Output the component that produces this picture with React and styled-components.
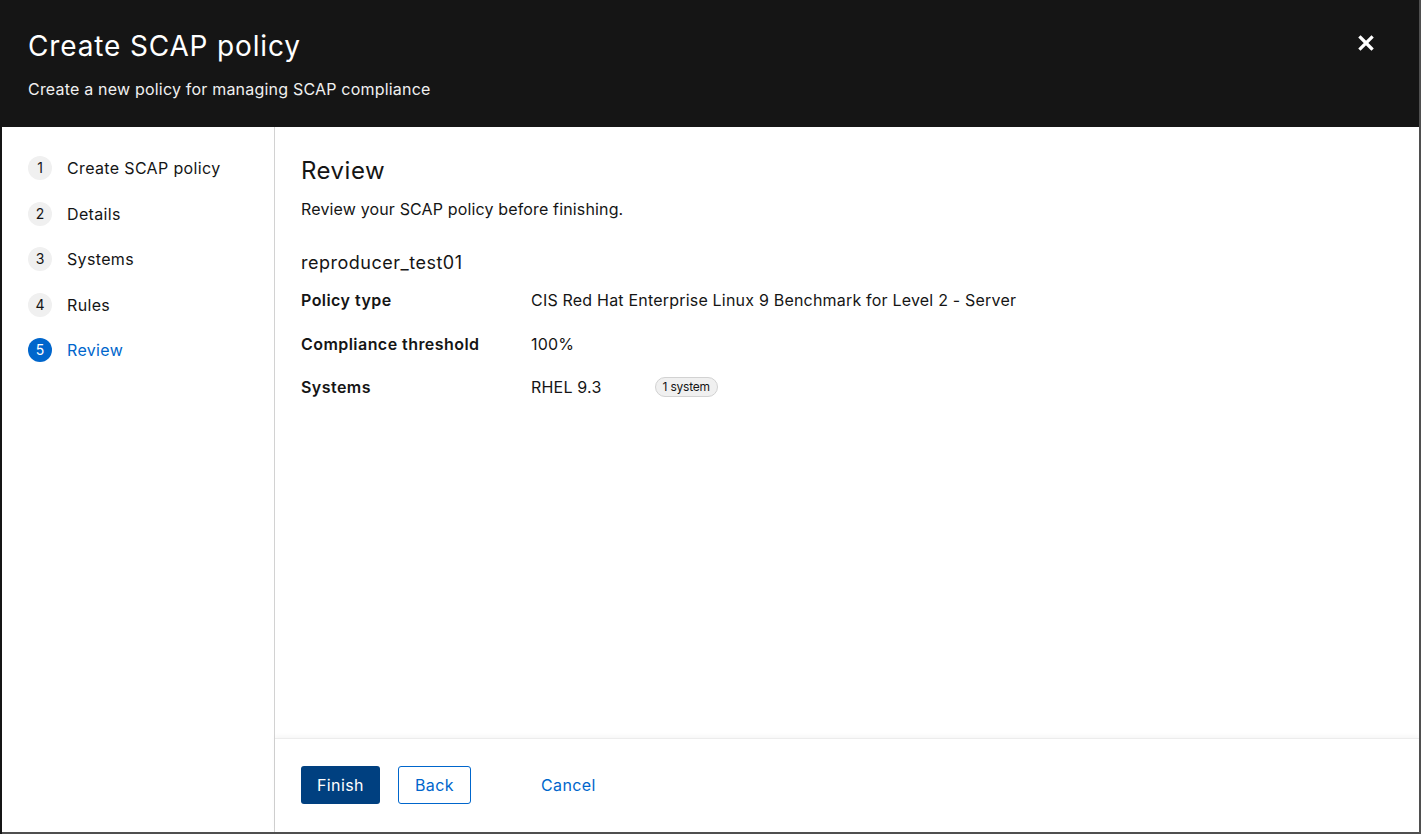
import React from 'react';
import styled, { createGlobalStyle } from 'styled-components';

const GlobalStyle = createGlobalStyle`
    html, body {
        margin: 0;
        padding: 0;
        height: 100%;
        background: #4f4f4f;
        font-family: Inter, "Noto Sans", sans-serif;
        color: #151515;
        letter-spacing: 0.2px;
    }
    #root {
        height: 100%;
    }
`;

const Backdrop = styled.div`
    height: 834px;
    box-sizing: border-box;
    padding: 0 2px 2px 0;
    border-left: 2px solid #151515;
    display: flex;
`;

const Modal = styled.div`
    flex: 1;
    display: flex;
    flex-direction: column;
    background: #fff;
    overflow: hidden;
`;

const Header = styled.div`
    height: 127px;
    box-sizing: border-box;
    background: #151515;
    color: #fff;
    padding: 27px 37px 0 26px;
    display: flex;
    justify-content: space-between;
    align-items: flex-start;
`;

const Title = styled.h1`
    margin: 0;
    font-size: 28px;
    font-weight: 400;
    line-height: 38px;
    letter-spacing: 0.85px;
`;

const Subtitle = styled.p`
    margin: 12px 0 0;
    font-size: 16px;
    line-height: 24px;
    color: #f0f0f0;
`;

const CloseBtn = styled.button`
    background: none;
    border: 0;
    padding: 8px;
    cursor: pointer;
    display: flex;
`;

const Body = styled.div`
    flex: 1;
    display: flex;
    min-height: 0;
`;

const Nav = styled.nav`
    width: 273px;
    border-right: 1px solid #d2d2d2;
    padding: 29px 0 0 26px;
    box-sizing: border-box;
    display: flex;
    flex-direction: column;
    gap: 21.5px;
`;

const NavItem = styled.div`
    display: flex;
    align-items: center;
    gap: 15px;
    font-size: 16px;
    line-height: 24px;
    letter-spacing: 0.35px;
    color: ${p => (p.active ? '#0066cc' : '#151515')};
`;

const Step = styled.span`
    width: 24px;
    height: 24px;
    border-radius: 50%;
    display: flex;
    align-items: center;
    justify-content: center;
    font-size: 14px;
    letter-spacing: 0;
    background: ${p => (p.active ? '#0066cc' : '#f0f0f0')};
    color: ${p => (p.active ? '#fff' : '#151515')};
`;

const Main = styled.div`
    flex: 1;
    display: flex;
    flex-direction: column;
`;

const Content = styled.div`
    flex: 1;
    padding: 27px 26px 0 26px;
`;

const Heading = styled.h2`
    margin: 0;
    font-size: 24px;
    font-weight: 400;
    line-height: 34px;
    letter-spacing: 0.5px;
`;

const Lead = styled.p`
    margin: 9px 0 0;
    font-size: 16px;
    line-height: 24px;
    letter-spacing: 0.15px;
`;

const Name = styled.h3`
    margin: 28px 0 0;
    font-size: 18px;
    font-weight: 400;
    line-height: 28px;
    letter-spacing: 0.5px;
`;

const List = styled.dl`
    margin: 11px 0 0;
    display: grid;
    grid-template-columns: 230px 1fr;
    row-gap: 19.5px;
`;

const Term = styled.dt`
    font-weight: 600;
    font-size: 16px;
    line-height: 24px;
    letter-spacing: 0.45px;
`;

const Desc = styled.dd`
    margin: 0;
    font-size: 16px;
    line-height: 24px;
    display: flex;
    align-items: center;
    gap: 53px;
`;

const Badge = styled.span`
    font-size: 12px;
    line-height: 16px;
    padding: 1px 7px;
    border: 1px solid #d2d2d2;
    border-radius: 30px;
    background: #f0f0f0;
    letter-spacing: -0.2px;
`;

const Footer = styled.div`
    border-top: 1px solid #ececec;
    box-shadow: 0 -2px 4px rgba(3, 3, 3, 0.04);
    padding: 27px 26px 28px 26px;
    display: flex;
    align-items: center;
    gap: 18px;
`;

const Button = styled.button`
    font-family: inherit;
    font-size: 16px;
    line-height: 24px;
    letter-spacing: 0.4px;
    height: 38px;
    padding: 0 16px;
    border-radius: 3px;
    cursor: pointer;
    background: ${p => (p.variant === 'primary' ? '#004080' : '#fff')};
    color: ${p => (p.variant === 'primary' ? '#fff' : '#0066cc')};
    border: ${p => (p.variant === 'secondary' ? '1px solid #0066cc' : '0')};
    margin-left: ${p => (p.variant === 'link' ? '36px' : '0')};
    ${p => p.variant === 'link' && 'background: transparent;'}
`;

const steps = ['Create SCAP policy', 'Details', 'Systems', 'Rules', 'Review'];

const rows = [
    ['Policy type', 'CIS Red Hat Enterprise Linux 9 Benchmark for Level 2 - Server'],
    ['Compliance threshold', '100%'],
];

function App() {
    return (
        <>
            <GlobalStyle />
            <Backdrop>
                <Modal>
                    <Header>
                        <div>
                            <Title>Create SCAP policy</Title>
                            <Subtitle>Create a new policy for managing SCAP compliance</Subtitle>
                        </div>
                        <CloseBtn aria-label="Close">
                            <svg width="16" height="16" viewBox="0 0 16 16">
                                <path d="M2.5 2.5 L13.5 13.5 M13.5 2.5 L2.5 13.5" stroke="#fff" strokeWidth="3.2" strokeLinecap="square" />
                            </svg>
                        </CloseBtn>
                    </Header>
                    <Body>
                        <Nav>
                            {steps.map((s, i) => (
                                <NavItem key={s} active={i === 4}>
                                    <Step active={i === 4}>{i + 1}</Step>
                                    {s}
                                </NavItem>
                            ))}
                        </Nav>
                        <Main>
                            <Content>
                                <Heading>Review</Heading>
                                <Lead>Review your SCAP policy before finishing.</Lead>
                                <Name>reproducer_test01</Name>
                                <List>
                                    {rows.map(([t, d]) => (
                                        <React.Fragment key={t}>
                                            <Term>{t}</Term>
                                            <Desc>{d}</Desc>
                                        </React.Fragment>
                                    ))}
                                    <Term>Systems</Term>
                                    <Desc>
                                        RHEL 9.3
                                        <Badge>1 system</Badge>
                                    </Desc>
                                </List>
                            </Content>
                            <Footer>
                                <Button variant="primary">Finish</Button>
                                <Button variant="secondary">Back</Button>
                                <Button variant="link">Cancel</Button>
                            </Footer>
                        </Main>
                    </Body>
                </Modal>
            </Backdrop>
        </>
    );
}

export default App;
